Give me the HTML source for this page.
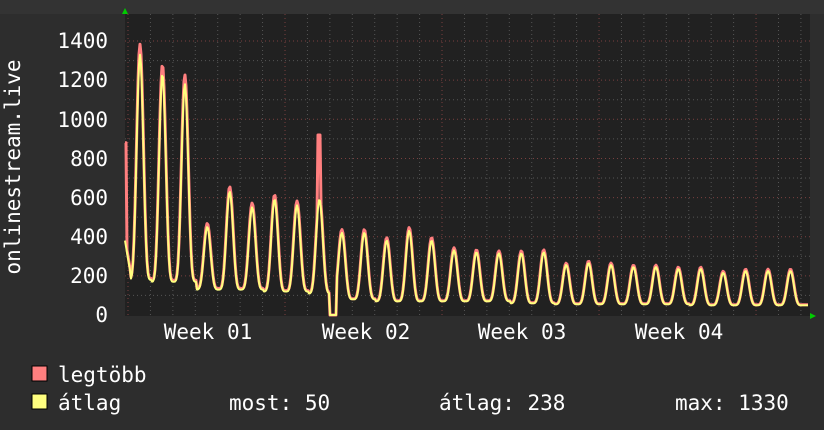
<!DOCTYPE html>
<html><head><meta charset="utf-8"><style>
html,body{margin:0;padding:0;background:#2d2d2d;}
svg{display:block;font-family:"DejaVu Sans Mono","Liberation Mono",monospace;}
</style></head><body>
<svg id="g" width="824" height="430" xmlns="http://www.w3.org/2000/svg">
<rect width="824" height="430" fill="#2d2d2d"/>
<rect width="824" height="14" fill="#333333"/>
<rect x="125" y="14" width="685" height="302" fill="#212121"/>
<g id="grid"></g>
<g fill="#fff" font-size="21" text-anchor="end">
<text x="108" y="48">1400</text>
<text x="108" y="87">1200</text>
<text x="108" y="127">1000</text>
<text x="108" y="166">800</text>
<text x="108" y="205">600</text>
<text x="108" y="244">400</text>
<text x="108" y="283">200</text>
<text x="108" y="322">0</text>
</g>
<text transform="translate(20,167) rotate(-90)" fill="#fff" font-size="21" text-anchor="middle">onlinestream.live</text>
<g fill="#fff" font-size="21" text-anchor="middle">
<text x="208" y="339">Week 01</text>
<text x="366" y="339">Week 02</text>
<text x="522" y="339">Week 03</text>
<text x="679" y="339">Week 04</text>
</g>
<polyline id="mx" fill="none" stroke="#ff7f7f" stroke-width="3" stroke-linejoin="round"/>
<polyline id="av" fill="none" stroke="#ffff7f" stroke-width="2" stroke-linejoin="round"/>
<polygon points="122,14 125,8 128,14" fill="#00cc00"/>
<polygon points="810,313 816,316 810,319" fill="#00cc00"/>
<rect x="32" y="366" width="15" height="15" fill="#ff7f7f" stroke="#000"/>
<rect x="32" y="394" width="15" height="15" fill="#ffff7f" stroke="#000"/>
<g fill="#fff" font-size="21">
<text x="58" y="382">legtöbb</text>
<text x="58" y="410">átlag</text>
<text x="229" y="410">most: 50</text>
<text x="439" y="410">átlag: 238</text>
<text x="675" y="410">max: 1330</text>
</g>
</svg>
<script>
var ns="http://www.w3.org/2000/svg",g=document.getElementById('grid');
function ln(x1,y1,x2,y2,c){var l=document.createElementNS(ns,'line');l.setAttribute('x1',x1);l.setAttribute('y1',y1);l.setAttribute('x2',x2);l.setAttribute('y2',y2);l.setAttribute('stroke',c);l.setAttribute('stroke-dasharray','1,3');g.appendChild(l);}
for(var v=100;v<=1400;v+=100){var y=315-v*0.1957;ln(125,y,810,y,v%200==0?'#7a4040':'#555');}
for(var x=128;x<810;x+=22.43){var wk=Math.abs(((x-128)/157)-Math.round((x-128)/157))<0.01;ln(x,14,x,316,wk?'#7a4040':'#555');}
var peaks=[1330,1230,1180,450,630,550,590,560,590,420,420,380,430,380,330,320,315,315,320,255,265,255,245,245,235,235,215,225,225,225];
var tr=[180,170,170,130,130,130,120,120,110,80,80,70,70,70,70,70,70,60,60,55,55,55,55,55,55,50,50,50,50,50];
var A=[],M=[];
for(var x=125;x<=808;x+=1){var p=(x-140)/22.43,i=Math.round(p),f=p-i;i=Math.max(0,Math.min(peaks.length-1,i));
var pk=peaks[i],t=tr[i];var s=Math.pow(Math.cos(f*Math.PI),2);s=Math.pow(s,2.2);
var v=t+(pk-t)*s; if(x<131)v=380-(x-125)*30; if(x>=330&&x<=336)v=0; if(x>800)v=50;
var m=v*1.04; if(x<127)m=880; if(x>=318&&x<=320)m=920;
A.push(x+','+(315-v*0.1957).toFixed(1));M.push(x+','+(315-Math.min(m,1400)*0.1957).toFixed(1));}
document.getElementById('av').setAttribute('points',A.join(' '));
document.getElementById('mx').setAttribute('points',M.join(' '));
</script>
</body></html>
